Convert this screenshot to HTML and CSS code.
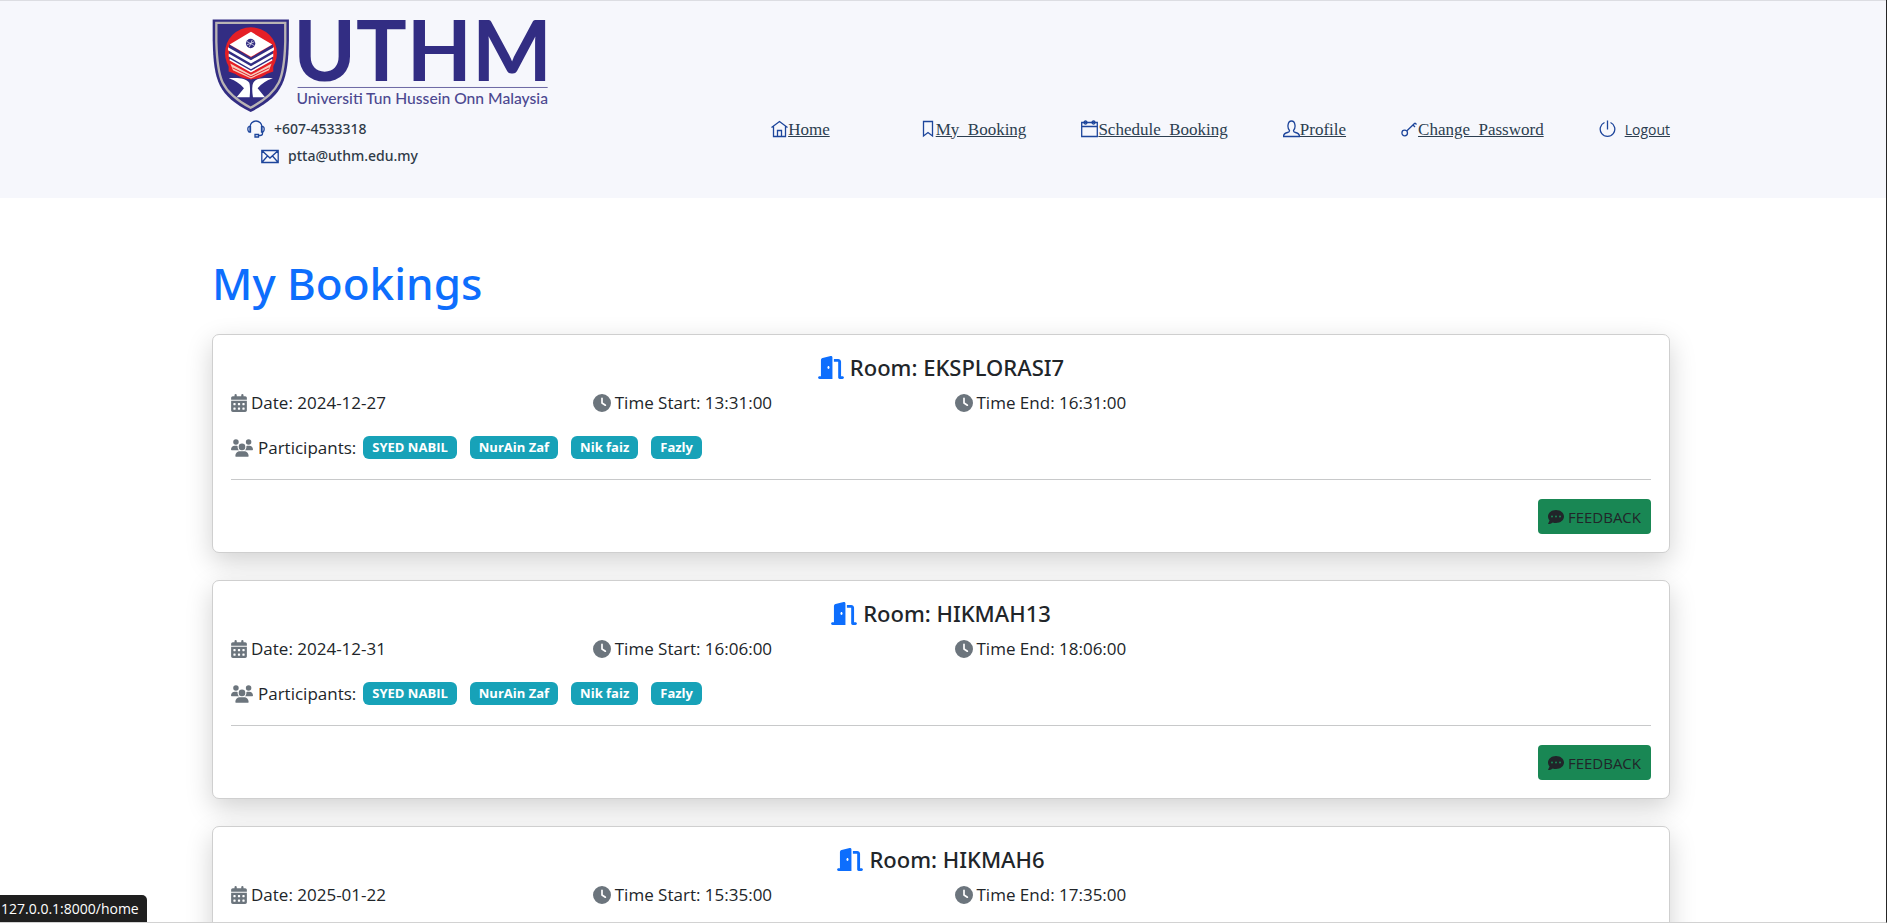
FILE: index.html
```html
<!DOCTYPE html>
<html lang="en">
<head>
<meta charset="utf-8">
<title>My Bookings</title>
<link rel="stylesheet" href="styles.css">
</head>
<body>
<svg class="sprite" aria-hidden="true">
  <symbol id="calendar" viewBox="0 0 448 512"><path fill-rule="evenodd" d="M0 464c0 26.500 21.500 48 48 48h352c26.500 0 48-21.500 48-48V192H0zM64 268q0-12 12-12h40q12 0 12 12v40q0 12-12 12H76q-12 0-12-12zm128 0q0-12 12-12h40q12 0 12 12v40q0 12-12 12h-40q-12 0-12-12zm128 0q0-12 12-12h40q12 0 12 12v40q0 12-12 12h-40q-12 0-12-12zM64 396q0-12 12-12h40q12 0 12 12v40q0 12-12 12H76q-12 0-12-12zm128 0q0-12 12-12h40q12 0 12 12v40q0 12-12 12h-40q-12 0-12-12zm128 0q0-12 12-12h40q12 0 12 12v40q0 12-12 12h-40q-12 0-12-12zM400 64h-48V32a32 32 0 0 0-64 0v32H160V32a32 32 0 0 0-64 0v32H48C21 64 0 85 0 112v48h448v-48c0-27-21-48-48-48z"/></symbol>
  <symbol id="clock" viewBox="0 0 512 512"><path fill-rule="evenodd" d="M256 0a256 256 0 1 1 0 512A256 256 0 1 1 256 0zM232 120V256c0 8 4 15.500 10.700 20l96 64c11 7.400 25.900 4.400 33.300-6.700s4.400-25.900-6.700-33.300L280 243.200V120c0-13.300-10.700-24-24-24s-24 10.700-24 24z"/></symbol>
  <symbol id="users" viewBox="0 0 640 512"><path d="M144 0a80 80 0 1 1 0 160A80 80 0 1 1 144 0zM512 0a80 80 0 1 1 0 160A80 80 0 1 1 512 0zM0 298.700C0 239.800 47.800 192 106.700 192h42.700c15.900 0 31 3.500 44.600 9.700c-1.300 7.200-1.900 14.700-1.900 22.300c0 38.200 16.800 72.500 43.300 96H21.300C9.600 320 0 310.400 0 298.700zM405.300 320c26-23.500 42.700-57.800 42.700-96c0-7.600-.7-15-1.900-22.300c13.600-6.300 28.700-9.700 44.600-9.700h42.700C592.200 192 640 239.800 640 298.700c0 11.800-9.600 21.300-21.300 21.300H405.300zM224 224a96 96 0 1 1 192 0 96 96 0 1 1-192 0zM128 485.300C128 411.700 187.700 352 261.300 352H378.700C452.300 352 512 411.700 512 485.300c0 14.700-11.900 26.700-26.700 26.700H154.700c-14.700 0-26.700-11.900-26.700-26.700z"/></symbol>
  <symbol id="door" viewBox="0 0 576 512"><path fill-rule="evenodd" d="M320 32c0-9.900-4.500-19.200-12.300-25.200S289.800-1.400 280.200 1l-179.900 45C79 51.300 64 70.500 64 92.500V448H32c-17.700 0-32 14.300-32 32s14.300 32 32 32H320V32zM256 256c0 17.700-10.700 32-24 32s-24-14.300-24-32s10.700-32 24-32s24 14.300 24 32zM352 128h96V480c0 17.700 14.300 32 32 32h64c17.700 0 32-14.300 32-32s-14.300-32-32-32H512V128c0-35.300-28.700-64-64-64H352v64z"/></symbol>
  <symbol id="comment" viewBox="0 0 512 512"><path fill-rule="evenodd" d="M256 448c141.400 0 256-93.100 256-208S397.400 32 256 32S0 125.100 0 240c0 45.100 17.700 86.800 47.700 120.900c-1.900 24.500-11.400 46.300-21.400 62.900c-8 13-15 22-21.400 28.700c-10 10-3 27.600 11.100 27.600c28.700 0 57.600-8.900 81.600-19.300c22.900-10 42.400-21.900 54.300-30.600c31.800 11.500 67 17.800 104.100 17.800zM128 208a32 32 0 1 1 0 64 32 32 0 1 1 0-64zm128 0a32 32 0 1 1 0 64 32 32 0 1 1 0-64zm128 0a32 32 0 1 1 0 64 32 32 0 1 1 0-64z"/></symbol>
</svg>

<header class="site-header">
  <div class="container">
    <svg class="logo" viewBox="36 54 1012 284" role="img" aria-label="UTHM, Universiti Tun Hussein Onn Malaysia">
      <path fill="#322d83" d="M38 58H267V120C264 245 250 285 152 336 55 285 41 245 38 120z"/>
      <path fill="none" stroke="#b9b4b4" stroke-width="7" d="M49 68H256V125C253 235 242 274 152 323 62 274 52 235 49 125z"/>
      <circle cx="153" cy="159" r="78" fill="#e51f26"/>
      <path fill="#322d83" d="M87 132 153 172 219 132V178L153 214 87 178z"/>
      <path fill="#fff" d="M153 95 217 133 153 170 89 133zM84 141 153 180 222 141V150L153 190 84 150zM86 160 153 198 220 160V169L153 207 86 169z"/>
      <path fill="#fff" d="M89 176 153 212 217 176V181L153 217 89 181z"/>
      <path fill="#e51f26" d="M86 182 153 219 220 182V214L153 238 86 214z"/>
      <path fill="#f6cdbd" d="M91 190 153 224 215 190 207 210 153 235 99 210z"/>
      <path fill="none" stroke="#e51f26" stroke-width="3" d="M98 203 153 230 208 203"/>
      <circle cx="152" cy="130" r="14" fill="#322d83"/>
      <path fill="none" stroke="#fff" stroke-width="2" d="M141 124 164 137M148 141 157 119M141 134 163 125"/>
      <path fill="#fff" d="M86 234C116 232 138 234 148 248Q152 258 149 291H110L132 264Q116 244 86 234zM219 234C189 232 167 234 160 248Q154 258 159 291H195L173 264Q189 244 219 234z"/>
      <path fill="#322d83" d="M151 240h5v52h-5z"/>
      <text class="logo-name" x="280" y="242">UTHM</text>
      <path stroke="#6a66a3" stroke-width="3" d="M293 262H1044"/>
      <text class="logo-sub" x="290" y="312">Universiti Tun Hussein Onn Malaysia</text>
    </svg>

    <div class="header-row">
      <div class="contact">
        <div class="contact-item phone">
          <svg class="line-icon" width="18" height="18" viewBox="0 0 18 18"><path d="M3 12V7a6 6 0 0 1 12 0v5M3 6.500H2Q.8 7 .8 9T2 12H3.500V6.500zM15 6.500h1Q17.200 7 17.200 9T16 12h-1.500V6.500zM15.500 12v1.500q0 2-2.500 2h-1.500M8 14.500h3.500v2.500H8z"/></svg>
          <span>+607-4533318</span>
        </div>
        <div class="contact-item email">
          <svg class="line-icon" width="18" height="18" viewBox="0 0 18 18"><path d="M.8 3.500h16.400v12H.8zM.8 3.500 9 11l8.200-7.500M.8 15.500 6.500 9M17.200 15.500 11.500 9"/></svg>
          <span>ptta@uthm.edu.my</span>
        </div>
      </div>
      <nav class="nav">
        <a class="nav-link home" href="#"><svg class="line-icon" width="17" height="18" viewBox="0 0 17 18"><path d="M.5 7.500 8.500 1.500l8 6M2.500 6v10.500h12V6M6.500 16.500v-6h4v6"/></svg><span>Home</span></a>
        <a class="nav-link" href="#"><svg class="line-icon" width="14" height="18" viewBox="0 0 14 18"><path d="M1.500 1.500h9v14.500L6 12.500 1.500 16z"/></svg><span>My&nbsp; Booking</span></a>
        <a class="nav-link" href="#"><svg class="line-icon" width="17" height="18" viewBox="0 0 17 18"><path d="M.7 2.500h15.600v14H.7zM.7 6.500h15.600"/><circle cx="4.500" cy="2.500" r="1.500"/><circle cx="12.500" cy="2.500" r="1.500"/></svg><span>Schedule&nbsp; Booking</span></a>
        <a class="nav-link" href="#"><svg class="line-icon" width="17" height="18" viewBox="0 0 17 18"><path d="M6.500 10.500C4 8 4.500 1 8.500 1s4.500 7 2 9.500Q10.300 12 12.500 12.500 16.500 13.500 16.500 16.500H.5Q.5 13.500 4.500 12.500 6.700 12 6.500 10.500z"/></svg><span>Profile</span></a>
        <a class="nav-link" href="#"><svg class="line-icon" width="17" height="18" viewBox="0 0 17 18"><circle cx="3.700" cy="13" r="2.800"/><path d="M5.700 11 14 3M12 5l2 2M14 3l1.500 1.500"/></svg><span>Change&nbsp; Password</span></a>
        <a class="nav-link logout" href="#"><svg class="line-icon" width="17" height="18" viewBox="0 0 17 18"><path d="M5.500 2.500a7.300 7.300 0 1 0 6 0M8.500 .5v9"/></svg><span>Logout</span></a>
      </nav>
    </div>
  </div>
</header>

<main class="container">
  <h1 class="page-title">My Bookings</h1>

  <article class="card">
    <h2 class="room"><svg class="icon-door"><use href="#door"/></svg>Room: EKSPLORASI7</h2>
    <div class="details">
      <div class="detail"><svg class="icon-calendar"><use href="#calendar"/></svg>Date: 2024-12-27</div>
      <div class="detail"><svg class="icon-clock"><use href="#clock"/></svg>Time Start: 13:31:00</div>
      <div class="detail"><svg class="icon-clock"><use href="#clock"/></svg>Time End: 16:31:00</div>
    </div>
    <div class="people"><svg class="icon-users"><use href="#users"/></svg><span class="people-label">Participants:</span>
      <span class="badge">SYED NABIL</span><span class="badge">NurAin Zaf</span><span class="badge">Nik faiz</span><span class="badge">Fazly</span></div>
    <hr class="rule">
    <div class="actions"><button class="feedback" type="button"><svg class="icon-comment"><use href="#comment"/></svg>FEEDBACK</button></div>
  </article>

  <article class="card">
    <h2 class="room"><svg class="icon-door"><use href="#door"/></svg>Room: HIKMAH13</h2>
    <div class="details">
      <div class="detail"><svg class="icon-calendar"><use href="#calendar"/></svg>Date: 2024-12-31</div>
      <div class="detail"><svg class="icon-clock"><use href="#clock"/></svg>Time Start: 16:06:00</div>
      <div class="detail"><svg class="icon-clock"><use href="#clock"/></svg>Time End: 18:06:00</div>
    </div>
    <div class="people"><svg class="icon-users"><use href="#users"/></svg><span class="people-label">Participants:</span>
      <span class="badge">SYED NABIL</span><span class="badge">NurAin Zaf</span><span class="badge">Nik faiz</span><span class="badge">Fazly</span></div>
    <hr class="rule">
    <div class="actions"><button class="feedback" type="button"><svg class="icon-comment"><use href="#comment"/></svg>FEEDBACK</button></div>
  </article>

  <article class="card">
    <h2 class="room"><svg class="icon-door"><use href="#door"/></svg>Room: HIKMAH6</h2>
    <div class="details">
      <div class="detail"><svg class="icon-calendar"><use href="#calendar"/></svg>Date: 2025-01-22</div>
      <div class="detail"><svg class="icon-clock"><use href="#clock"/></svg>Time Start: 15:35:00</div>
      <div class="detail"><svg class="icon-clock"><use href="#clock"/></svg>Time End: 17:35:00</div>
    </div>
  </article>
</main>

<div class="status">127.0.0.1:8000/home</div>
</body>
</html>
```

FILE: styles.css
```css
* { box-sizing: border-box; }

body {
  margin: 0;
  height: 100vh;
  overflow: hidden;
  border-right: 1px solid #262626;
  border-bottom: 1px solid #d2d2d2;
  background: #fff;
  color: #212529;
  font-family: "Open Sans", "Noto Sans", sans-serif;
  font-size: 17px;
  line-height: 27px;
}

.sprite { position: absolute; width: 0; height: 0; }

.container {
  width: calc(100% - 4px);
  padding: 0 calc(50% - 731px);
}

.site-header {
  border-top: 1px solid #dcdde2;
  background: #f6f7fc;
  padding: 17px 0 29px;
}

.logo { display: block; width: 337px; height: 95px; overflow: visible; }
.logo-name { font: 700 254px Lato, sans-serif; fill: #322d83; }
.logo-sub { font: 500 47px Lato, sans-serif; fill: #4c4890; }

.header-row { display: flex; justify-content: space-between; align-items: flex-start; padding-top: 2px; }

.line-icon { flex: none; fill: none; stroke: #1d459b; stroke-width: 1.3; }

.contact { font-family: "Noto Sans", sans-serif; font-size: 14px; font-weight: 500; color: #2f3b48; }
.contact-item { display: flex; align-items: center; gap: 9px; height: 27px; }
.phone { padding-left: 35px; }
.email { padding-left: 49px; }

.nav {
  display: flex;
  align-items: center;
  gap: 55px;
  height: 28px;
  font-family: "Liberation Serif", serif;
}
.nav-link { display: flex; align-items: center; color: #2c3e50; text-decoration: none; }
.nav-link span { text-decoration: underline; }
.home { margin-right: 37px; }
.logout { gap: 9px; font-family: "Open Sans", sans-serif; font-size: 14px; }

.page-title {
  margin: 58px 0 24px;
  color: #0d6efd;
  font-family: "Noto Sans", sans-serif;
  font-size: 44px;
  font-weight: 500;
  line-height: 54px;
}

.card {
  margin-bottom: 27px;
  padding: 18px;
  border: 1px solid #cfcfcf;
  border-radius: 7px;
  background: #fff;
  box-shadow: 0 9px 27px rgba(0, 0, 0, .18);
}

.room {
  display: flex;
  justify-content: center;
  align-items: center;
  gap: 6px;
  margin: 0 0 8px;
  font-family: "Noto Sans", sans-serif;
  font-size: 22px;
  font-weight: 500;
  line-height: 28px;
}
.icon-door { width: 26px; height: 23px; fill: #0d6efd; }

.details { display: grid; grid-template-columns: repeat(4, 1fr); gap: 27px; margin-bottom: 18px; }
.detail { display: flex; align-items: center; gap: 4px; }
.icon-calendar { width: 16px; height: 18px; fill: #6c757d; }
.icon-clock { width: 18px; height: 18px; fill: #6c757d; }

.people { display: flex; align-items: center; }
.icon-users { width: 22px; height: 18px; margin-right: 5px; fill: #6c757d; }
.people-label { margin-right: 7px; }
.badge {
  margin-right: 13px;
  padding: 0 9px;
  border-radius: 6px;
  background: #17a2b8;
  color: #fff;
  font-size: 13px;
  font-weight: 700;
  line-height: 23px;
}

.rule { margin: 18px 0 19px; border: 0; border-top: 1px solid #c8c9ca; }

.actions { display: flex; justify-content: flex-end; }
.feedback {
  display: flex;
  align-items: center;
  gap: 4px;
  height: 35px;
  padding: 0 10px;
  border: 0;
  border-radius: 4px;
  background: #198754;
  color: #212529;
  font: 15px "Open Sans", sans-serif;
}
.icon-comment { width: 16px; height: 16px; fill: #212529; }

/* link preview over the lower left corner of the page */
.status {
  position: absolute;
  left: 0;
  bottom: 1px;
  padding: 0 8px 0 1px;
  border-top-right-radius: 5px;
  background: #1f1f1f;
  color: #fff;
  font-size: 14px;
  line-height: 27px;
}
```
